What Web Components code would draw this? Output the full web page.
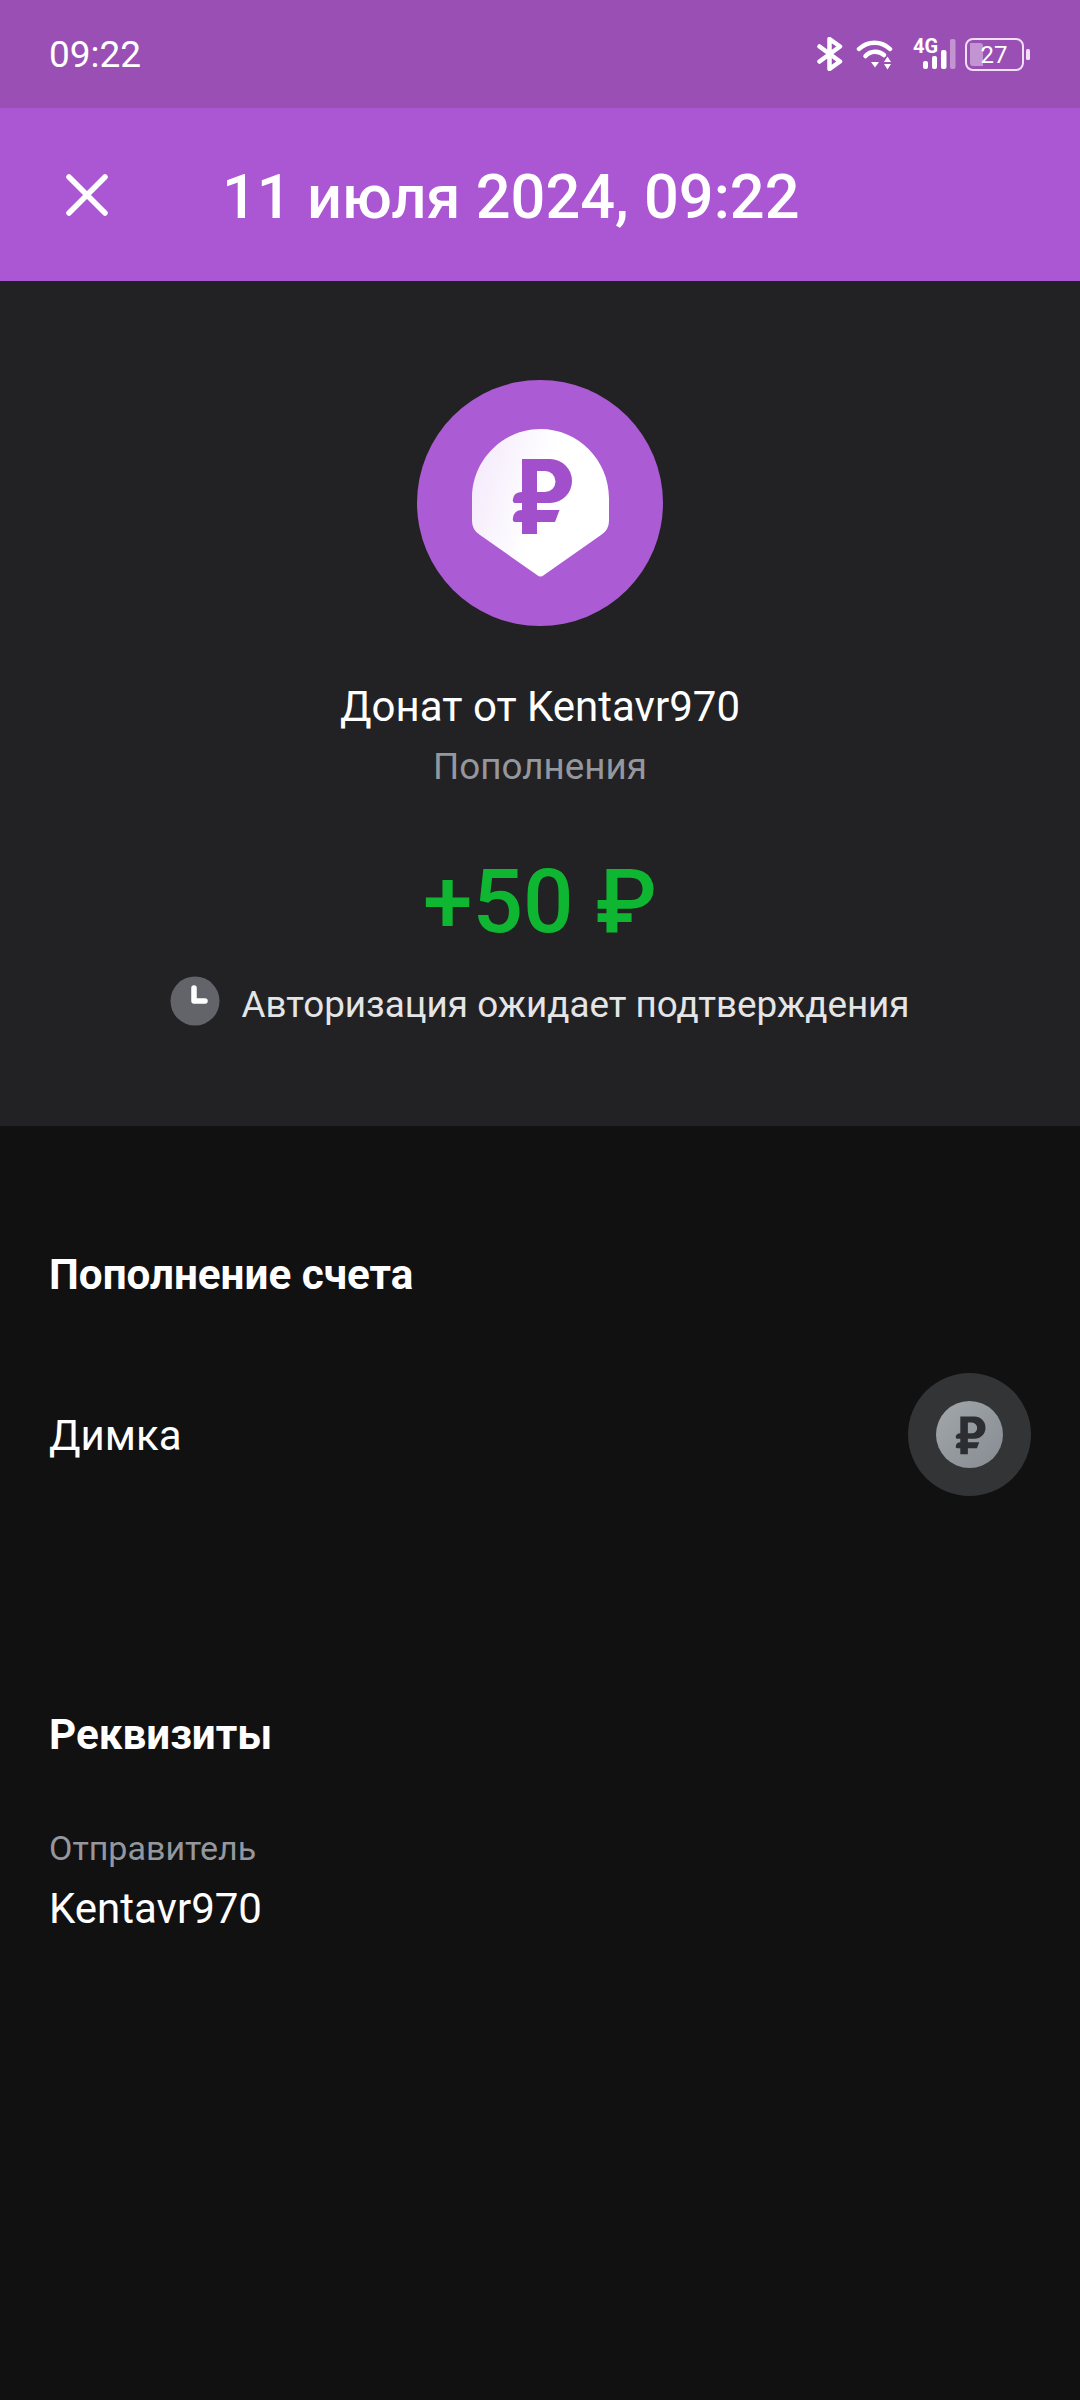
<!DOCTYPE html>
<html lang="ru">
<head>
<meta charset="utf-8">
<title>Донат</title>
<style>
  html, body { margin: 0; background: #111112; }
  body { width: 1080px; height: 2400px; overflow: hidden; font-family: Roboto, "Noto Sans", sans-serif; color: #fff; }
</style>
</head>
<body>
<status-bar time="09:22" battery="27"></status-bar>
<app-header>11 июля 2024, 09:22</app-header>
<txn-summary title-text="Донат от Kentavr970" category="Пополнения" amount="+50 ₽" state="Авторизация ожидает подтверждения"></txn-summary>
<info-section heading="Пополнение счета">
  <account-row>Димка</account-row>
</info-section>
<info-section heading="Реквизиты" class="second">
  <detail-field label="Отправитель">Kentavr970</detail-field>
</info-section>

<script>
// ruble sign used by both badges, drawn in a 246x246 box
const RUBLE_PATH = "M105 79H133A22 22 0 0 1 133 123H120V130H142.500L138 142H120V154H105V142H99Q95 142 96 138Q97 130 105 130V123H99Q95 123 96 119Q97 112 105 112ZM120 91V112H128A10.500 10.500 0 0 0 128 91Z";

class StatusBar extends HTMLElement {
  connectedCallback() {
    const root = this.attachShadow({ mode: "open" });
    root.innerHTML = `
      <style>
        :host { display: flex; align-items: center; justify-content: space-between; box-sizing: border-box; height: 108px; padding: 0 49px; background: #9a4fb5; color: #fff; }
        .time { font-size: 37px; line-height: 108px; padding-top: 2px; }
        .icons { display: flex; align-items: center; }
        svg { display: block; }
        .wifi { margin-left: 13px; }
        .net { position: relative; width: 43px; height: 32px; margin-left: 20px; }
        .net b { position: absolute; left: 0; top: -2px; font: 700 20px/20px Roboto, sans-serif; }
        .net svg { position: absolute; left: 0; top: 0; }
        .batt { position: relative; width: 66px; height: 33px; margin-left: 9px; }
        .batt span { position: absolute; left: 0; width: 58px; top: 0; font-size: 24px; line-height: 34px; text-align: center; }
      </style>
      <div class="time">${this.getAttribute("time")}</div>
      <div class="icons">
        <svg width="26" height="34" viewBox="0 0 26 34" fill="none" stroke="#fff" stroke-width="4.500" stroke-linecap="round" stroke-linejoin="round"><path d="M2.500 9.500 23 24.500 12.500 32V2L23 9.500 2.500 24.500"/></svg>
        <svg class="wifi" width="37" height="33" viewBox="0 0 37 33" fill="none" stroke="#fff" stroke-width="4.500" stroke-linecap="round"><path d="M3 11C11.500 2.500 25.500 2.500 34 11"/><path d="M9.500 18C14.500 12.500 23 12.500 28 17"/><path d="M15 24H23L19 29.500Z" fill="#fff" stroke="none"/><path d="M31.500 18.500 35 24H28ZM28 26H35L31.500 31.500Z" fill="#fff" stroke="none"/></svg>
        <div class="net">
          <b>4G</b>
          <svg width="43" height="32" viewBox="0 0 43 32"><g fill="#fff"><rect x="10" y="23" width="5" height="8" rx="2"/><rect x="19" y="18" width="5" height="13" rx="2"/><rect x="28" y="12" width="5.500" height="19" rx="2"/></g><rect x="37" y="1" width="5.500" height="30" rx="2" fill="#fff" fill-opacity=".4"/></svg>
        </div>
        <div class="batt">
          <svg width="66" height="33" viewBox="0 0 66 33"><rect x="1" y="1" width="57" height="31" rx="7" fill="none" stroke="#f0dff6" stroke-width="2"/><path d="M5 5H15Q18 5 18 8V28H8Q5 28 5 25Z" fill="#fff" fill-opacity=".4"/><rect x="61" y="11" width="4" height="11" rx="1.500" fill="#f0dff6"/></svg>
          <span>${this.getAttribute("battery")}</span>
        </div>
      </div>`;
  }
}
customElements.define("status-bar", StatusBar);

class AppHeader extends HTMLElement {
  connectedCallback() {
    const root = this.attachShadow({ mode: "open" });
    root.innerHTML = `
      <style>
        :host { display: flex; align-items: center; box-sizing: border-box; height: 173px; padding-left: 64px; background: #ab57d3; color: #fff; }
        svg { flex: none; display: block; }
        h1 { margin: 4px 0 0 112px; font-size: 61.300px; line-height: 72px; font-weight: 500; white-space: nowrap; }
      </style>
      <svg width="46" height="46" viewBox="0 0 46 46" fill="none" stroke="#fff" stroke-width="5.500" stroke-linecap="round"><path d="M5 5 41 41M41 5 5 41"/></svg>
      <h1><slot></slot></h1>`;
  }
}
customElements.define("app-header", AppHeader);

class PinBadge extends HTMLElement {
  connectedCallback() {
    const root = this.attachShadow({ mode: "open" });
    root.innerHTML = `
      <style>
        :host { display: block; width: 246px; height: 246px; }
        svg { display: block; }
      </style>
      <svg width="246" height="246" viewBox="0 0 246 246">
        <defs><linearGradient id="pin" x1="0" y1="0" x2="1" y2=".3"><stop offset="0" stop-color="#f3e8fb"/><stop offset=".6" stop-color="#fff"/></linearGradient></defs>
        <circle cx="123" cy="123" r="123" fill="#ab5bd3"/>
        <path d="M123.500 49C161 49 192 80 192 118V141Q192 150 184 155L127 195Q123.500 198 120 195L63 155Q55 150 55 141V118C55 80 86 49 123.500 49Z" fill="url(#pin)"/>
        <path d="${RUBLE_PATH}" fill="#a24fcb" fill-rule="evenodd"/>
      </svg>`;
  }
}
customElements.define("pin-badge", PinBadge);

class TxnSummary extends HTMLElement {
  connectedCallback() {
    const root = this.attachShadow({ mode: "open" });
    root.innerHTML = `
      <style>
        :host { display: flex; flex-direction: column; align-items: center; box-sizing: border-box; height: 845px; padding-top: 99px; background: #222224; text-align: center; }
        .title { margin-top: 53px; font-size: 42px; line-height: 56px; color: #fff; }
        .cat { margin-top: 8px; font-size: 36.800px; line-height: 48px; color: #94989e; }
        .amount { margin-top: 61px; font-size: 89px; line-height: 100px; font-weight: 500; color: #0eb631; }
        .state { display: flex; align-items: center; gap: 21px; margin-top: 28px; font-size: 36.800px; line-height: 48px; color: #e4e5e7; }
        .state span { position: relative; top: 1px; }
        svg { display: block; flex: none; margin-top: -6px; }
      </style>
      <pin-badge></pin-badge>
      <div class="title">${this.getAttribute("title-text")}</div>
      <div class="cat">${this.getAttribute("category")}</div>
      <div class="amount">${this.getAttribute("amount")}</div>
      <div class="state">
        <svg width="50" height="50" viewBox="0 0 50 50"><circle cx="25" cy="25" r="24.500" fill="#62646a"/><path d="M24 12V25H35" fill="none" stroke="#fff" stroke-width="5.500" stroke-linecap="round" stroke-linejoin="round"/></svg>
        <span>${this.getAttribute("state")}</span>
      </div>`;
  }
}
customElements.define("txn-summary", TxnSummary);

class InfoSection extends HTMLElement {
  connectedCallback() {
    const root = this.attachShadow({ mode: "open" });
    root.innerHTML = `
      <style>
        :host { display: block; padding: 123px 49px 0; }
        :host(.second) { padding-top: 213px; }
        h2 { margin: 0; font-size: 42.200px; line-height: 52px; font-weight: 700; color: #fff; }
      </style>
      <h2>${this.getAttribute("heading")}</h2>
      <slot></slot>`;
  }
}
customElements.define("info-section", InfoSection);

class AccountRow extends HTMLElement {
  connectedCallback() {
    const root = this.attachShadow({ mode: "open" });
    root.innerHTML = `
      <style>
        :host { display: flex; align-items: center; justify-content: space-between; margin-top: 72px; font-size: 42px; line-height: 56px; color: #fff; }
        .name { padding-top: 3px; }
        .icon { display: flex; align-items: center; justify-content: center; width: 123px; height: 123px; border-radius: 50%; background: #333435; }
        svg { display: block; }
      </style>
      <div class="name"><slot></slot></div>
      <div class="icon">
        <svg width="67" height="67" viewBox="0 0 246 246">
          <defs><linearGradient id="coin" x1="0" y1="0" x2="1" y2="1"><stop offset="0" stop-color="#a2a7ac"/><stop offset="1" stop-color="#878c92"/></linearGradient></defs>
          <circle cx="123" cy="123" r="123" fill="url(#coin)"/>
          <path d="${RUBLE_PATH}" transform="translate(-105 -89) scale(1.85)" fill="#2c2e31" fill-rule="evenodd"/>
        </svg>
      </div>`;
  }
}
customElements.define("account-row", AccountRow);

class DetailField extends HTMLElement {
  connectedCallback() {
    const root = this.attachShadow({ mode: "open" });
    root.innerHTML = `
      <style>
        :host { display: block; margin-top: 65px; }
        .label { font-size: 34px; line-height: 44px; color: #94989e; }
        .value { margin-top: 11px; font-size: 42px; line-height: 56px; color: #fff; }
      </style>
      <div class="label">${this.getAttribute("label")}</div>
      <div class="value"><slot></slot></div>`;
  }
}
customElements.define("detail-field", DetailField);
</script>
</body>
</html>
